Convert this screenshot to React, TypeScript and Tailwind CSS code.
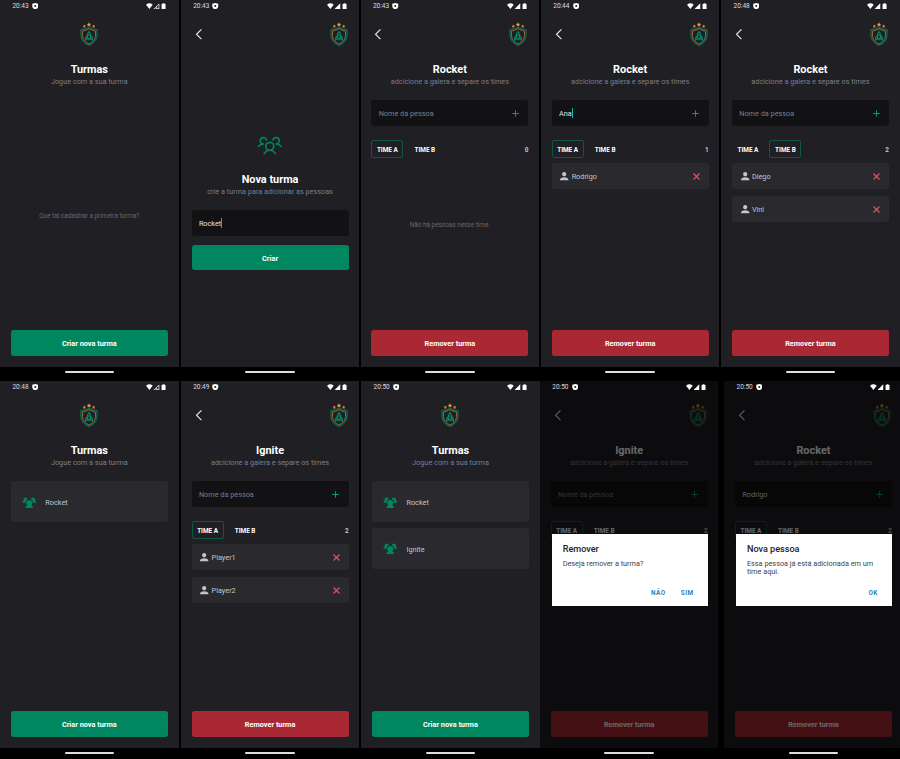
import type { ReactNode } from "react";
import { PiUsersThree, PiCaretLeft } from "react-icons/pi";
import { MdPerson, MdAdd } from "react-icons/md";

function StatusBar({ time, weak }: { time: string; weak?: boolean }) {
  return (
    <div className="relative z-20 flex h-[12px] items-center pl-[12.4px] pr-[12px] text-[6.5px] leading-[12px] text-white">
      <span className="w-[17px] whitespace-nowrap text-[#dcdce0]">{time}</span>
      <svg className="ml-[2.3px] h-[6.5px] w-[6.5px]" viewBox="0 0 12 12">
        <path d="M6 0 11.5 1.5V6C11.5 9 9 11 6 12 3 11 .5 9 .5 6V1.5Z" fill="#fff" />
        <circle cx="6" cy="5.5" r="1.8" fill="#202024" />
      </svg>
      <svg className="ml-auto h-[6.6px] w-[20.6px]" viewBox="0 0 62 20">
        <path d="M0 5Q10-3 20 5L10 18Z" fill="#fff" />
        {weak ? (
          <path d="M24 18 39 3V18Z M32 11V17H38" fill="none" stroke="#fff" strokeWidth="2.200" />
        ) : (
          <path d="M22 19 40 1V19Z" fill="#fff" />
        )}
        <path d="M50 1H56V3H59V20H47V3H50Z" fill="#fff" />
      </svg>
    </div>
  );
}

function Logo() {
  return (
    <svg className="h-[24px] w-[18px] shrink-0" viewBox="0 0 54 72" fill="none">
      <path d="M27 16C20 20 11 23 3 23V40C3 55 14 64 27 70C40 64 51 55 51 40V23C43 23 34 20 27 16Z" stroke="#0a6a50" strokeWidth="4" />
      <path d="M27 20C21 24 13 26 7.500 27V40C7.500 52 16 61 27 66C38 61 46.500 52 46.500 40V27C41 26 33 24 27 20Z" stroke="#a2683c" strokeWidth="2.800" />
      <path d="M27 29C22 34 21 41 23 50H31C33 41 32 34 27 29Z M22 41 17 47V54L23 50 M32 41 37 47V54L31 50 M27 50V55" stroke="#058b65" strokeWidth="3.500" />
      <circle cx="27" cy="40" r="2.500" stroke="#058b65" strokeWidth="2" />
      <path d="m27 1 2 4.200 4.600.6-3.400 3.200.9 4.600L27 11.400l-4.100 2.200.9-4.600L20.400 5.800l4.600-.6Z" fill="#f0953a" />
      <path d="m13 8 1.600 2.700 3 .7-2.100 2.300.4 3.200L13 15.600l-2.900 1.300.4-3.200-2.100-2.300 3-.7Z M41 8l1.600 2.700 3 .7-2.100 2.300.4 3.200L41 15.600l-2.900 1.300.4-3.200-2.100-2.300 3-.7Z" fill="#e58b37" />
    </svg>
  );
}

function Header({ back }: { back?: boolean }) {
  return (
    <div className={back ? "flex h-[24px] items-center justify-between pr-[1px]" : "flex h-[24px] justify-center"}>
      {back && <PiCaretLeft className="h-[14.5px] w-[14.5px] stroke-white text-white [stroke-width:5]" />}
      <Logo />
    </div>
  );
}

function Heading({ title, subtitle }: { title: string; subtitle: string }) {
  return (
    <div className="text-center">
      <h1 className="h-[14px] text-[10.9px] font-bold leading-[14px] text-white">{title}</h1>
      <p className="h-[10px] whitespace-nowrap text-[7.3px] leading-[10px] text-[#7c7c8a]">{subtitle}</p>
    </div>
  );
}

function Button({ label, red }: { label: string; red?: boolean }) {
  return (
    <button className={red
      ? "block h-[25.5px] w-full shrink-0 rounded-[2.7px] bg-[#aa2834] pt-[2.7px] text-[7.3px] font-bold leading-[22.8px] text-white"
      : "block h-[25.5px] w-full shrink-0 rounded-[2.7px] bg-[#00875f] pt-[2.7px] text-[7.3px] font-bold leading-[22.8px] text-white"}>
      {label}
    </button>
  );
}

function Field({ value, caret, add = true }: { value?: string; caret?: boolean; add?: boolean }) {
  return (
    <div className="flex h-[25.5px] shrink-0 items-center rounded-[2.7px] bg-[#121214] px-[7.3px] text-[7.3px]">
      <span className={value ? "pt-[2px] text-[#e1e1e6]" : "pt-[2px] text-[#7c7c8a]"}>{value ?? "Nome da pessoa"}</span>
      {caret && <span className="h-[10px] w-px bg-[#12b8a6]" />}
      {add && <MdAdd className="ml-auto h-[11px] w-[11px] text-[#00a574]" />}
    </div>
  );
}

function Tabs({ active, count }: { active: "A" | "B"; count: number }) {
  return (
    <div className="flex h-[18px] items-center text-[6.4px] font-bold leading-[9px] text-white">
      {["A", "B"].map((t) => (
        <span
          key={t}
          className={t === active
            ? "mr-[5.5px] flex h-[18px] w-[32px] items-center justify-center rounded-[2px] border border-[#0f5643] pt-[2px]"
            : "mr-[5.5px] flex h-[18px] w-[32px] items-center justify-center pt-[2px]"}
        >
          TIME {t}
        </span>
      ))}
      <span className="ml-auto pt-[2px] text-[#c4c4cc]">{count}</span>
    </div>
  );
}

function Player({ name }: { name: string }) {
  return (
    <div className="mb-[7.3px] flex h-[25.6px] items-center rounded-[2.7px] bg-[#29292e] pl-[6.6px] pr-[9px] text-[7.3px] text-[#c4c4cc]">
      <MdPerson className="h-[12.4px] w-[12.4px]" />
      <span className="ml-[1px] pt-[2.4px]">{name}</span>
      <svg className="ml-auto mt-[0.6px] h-[7px] w-[7px]" viewBox="0 0 14 14" fill="none" stroke="#e25562" strokeWidth="2.200">
        <path d="M1 1 13 13M13 1 1 13" />
      </svg>
    </div>
  );
}

function GroupIcon() {
  return (
    <svg className="mt-[1px] h-[11.4px] w-[14.6px]" viewBox="0 0 44 34" fill="#00875f">
      <path d="M22 9C27.500 9 31 13 31 18C31 21 30 23 28.500 25C31 27 33 29.500 34 33H10C11 29.500 13 27 15.500 25C14 23 13 21 13 18C13 13 16.500 9 22 9Z" />
      <path d="M17 6.500C13.500 8 11 12 11 17H1C1.500 14 3 12 5 10.500C3.500 5 7 1 11.500 1C14.500 1 17 3.500 17 6.500Z" />
      <path d="M27 6.500C30.500 8 33 12 33 17H43C42.500 14 41 12 39 10.500C40.500 5 37 1 32.500 1C29.500 1 27 3.500 27 6.500Z" />
    </svg>
  );
}

function Group({ name }: { name: string }) {
  return (
    <div className="mb-[5.5px] flex h-[41.2px] items-center rounded-[2.7px] bg-[#29292e] pl-[10.9px] text-[7.3px] text-[#c4c4cc]">
      <GroupIcon />
      <span className="ml-[9px] pt-[3px]">{name}</span>
    </div>
  );
}

function Alert({ title, text, actions }: { title: string; text: string; actions: string[] }) {
  return (
    <>
      <div className="absolute inset-0 z-10 bg-black/60" />
      <div className="absolute left-[11.8px] top-[153px] z-30 flex h-[71.5px] w-[156px] flex-col bg-white pl-[11px] pr-[14px] pt-[9px]">
        <h2 className="text-[9.1px] font-medium leading-[12px] text-[#222]">{title}</h2>
        <p className="mt-[4.6px] text-[7.3px] leading-[8.8px] text-[#444]">{text}</p>
        <div className="mb-[7.5px] mt-auto flex justify-end gap-[15px] text-[6.4px] font-bold leading-[9px] tracking-[0.5px] text-[#2b83c0]">
          {actions.map((a) => <span key={a}>{a}</span>)}
        </div>
      </div>
    </>
  );
}

type PhoneProps = {
  time: string;
  weak?: boolean;
  back?: boolean;
  title: string;
  subtitle: string;
  footer: ReactNode;
  children?: ReactNode;
  overlay?: ReactNode;
};

function Phone({ time, weak, back, title, subtitle, footer, children, overlay }: PhoneProps) {
  return (
    <section className="w-[178.6px] shrink-0">
      <div className="relative flex h-[367px] flex-col bg-[#202024]">
        <StatusBar time={time} weak={weak} />
        <div className="flex flex-1 flex-col px-[10.8px] pb-[11.3px] pt-[10px]">
          <Header back={back} />
          <div className="pt-[16.5px]">
            <Heading title={title} subtitle={subtitle} />
          </div>
          <div className="flex flex-1 flex-col pt-[13.8px]">{children}</div>
          {footer}
        </div>
        {overlay}
      </div>
      <NavBar />
    </section>
  );
}

function NavBar() {
  return (
    <div className="flex h-[14px] justify-center pt-[4px]">
      <div className="h-[2px] w-[49.5px] rounded-[1px] bg-[#dedede]" />
    </div>
  );
}

function Home({ time, weak, groups }: { time: string; weak?: boolean; groups: string[] }) {
  return (
    <Phone time={time} weak={weak} title="Turmas" subtitle="Jogue com a sua turma" footer={<Button label="Criar nova turma" />}>
      {groups.length > 0 ? groups.map((g) => <Group key={g} name={g} />) : (
        <p className="pt-[112px] text-center text-[6.4px] leading-[9px] text-[#67676f]">Que tal cadastrar a primeira turma?</p>
      )}
    </Phone>
  );
}

type TeamProps = { time: string; title: string; value?: string; caret?: boolean; active?: "A" | "B"; count: number; players?: string[]; overlay?: ReactNode };

function Team({ time, title, value, caret, active = "A", count, players, overlay }: TeamProps) {
  return (
    <Phone back time={time} title={title} subtitle="adcicione a galera e separe os times" footer={<Button red label="Remover turma" />} overlay={overlay}>
      <Field value={value} caret={caret} />
      <div className="pb-[5px] pt-[14.5px]">
        <Tabs active={active} count={count} />
      </div>
      {players?.map((p) => <Player key={p} name={p} />)}
      {players?.length === 0 && (
        <p className="pt-[57.5px] text-center text-[6.4px] leading-[9px] text-[#67676f]">Não há pessoas nesse time.</p>
      )}
    </Phone>
  );
}

function NewGroup() {
  return (
    <section className="w-[178.6px] shrink-0">
      <div className="flex h-[367px] flex-col bg-[#202024]">
        <StatusBar time="20:43" />
        <div className="px-[10.8px] pt-[10px]">
          <Header back />
          <PiUsersThree className="mx-auto mt-[85.6px] h-[25.5px] w-[25.5px] text-[#00875f]" />
          <div className="mt-[15.9px]">
            <Heading title="Nova turma" subtitle="crie a turma para adicionar as pessoas" />
          </div>
          <div className="mb-[9px] mt-[13.5px]">
            <Field value="Rocket" caret add={false} />
          </div>
          <Button label="Criar" />
        </div>
      </div>
      <NavBar />
    </section>
  );
}

export default function App() {
  return (
    <main className="h-[759px] w-[900px] overflow-hidden bg-black font-['Roboto',sans-serif]">
      <div className="flex h-[381px] gap-[1.7px]">
        <Home time="20:43" weak groups={[]} />
        <div className="-mr-[0.5px] ml-[0.5px]">
          <NewGroup />
        </div>
        <Team time="20:43" title="Rocket" count={0} players={[]} />
        <Team time="20:44" title="Rocket" value="Ana" caret count={1} players={["Rodrigo"]} />
        <Team time="20:48" title="Rocket" active="B" count={2} players={["Diego", "Vini"]} />
      </div>
      <div className="flex h-[378px]">
        <Home time="20:48" weak groups={["Rocket"]} />
        <div className="ml-[2.2px]">
          <Team time="20:49" title="Ignite" count={2} players={["Player1", "Player2"]} />
        </div>
        <div className="ml-[1.8px]">
          <Home time="20:50" groups={["Rocket", "Ignite"]} />
        </div>
        <div className="ml-[0.1px]">
          <Team
            time="20:50"
            title="Ignite"
            count={2}
            overlay={<Alert title="Remover" text="Deseja remover a turma?" actions={["NÃO", "SIM"]} />}
          />
        </div>
        <div className="ml-[5.7px]">
          <Team
            time="20:50"
            title="Rocket"
            value="Rodrigo"
            count={2}
            overlay={<Alert title="Nova pessoa" text="Essa pessoa já está adicionada em um time aqui." actions={["OK"]} />}
          />
        </div>
      </div>
    </main>
  );
}
